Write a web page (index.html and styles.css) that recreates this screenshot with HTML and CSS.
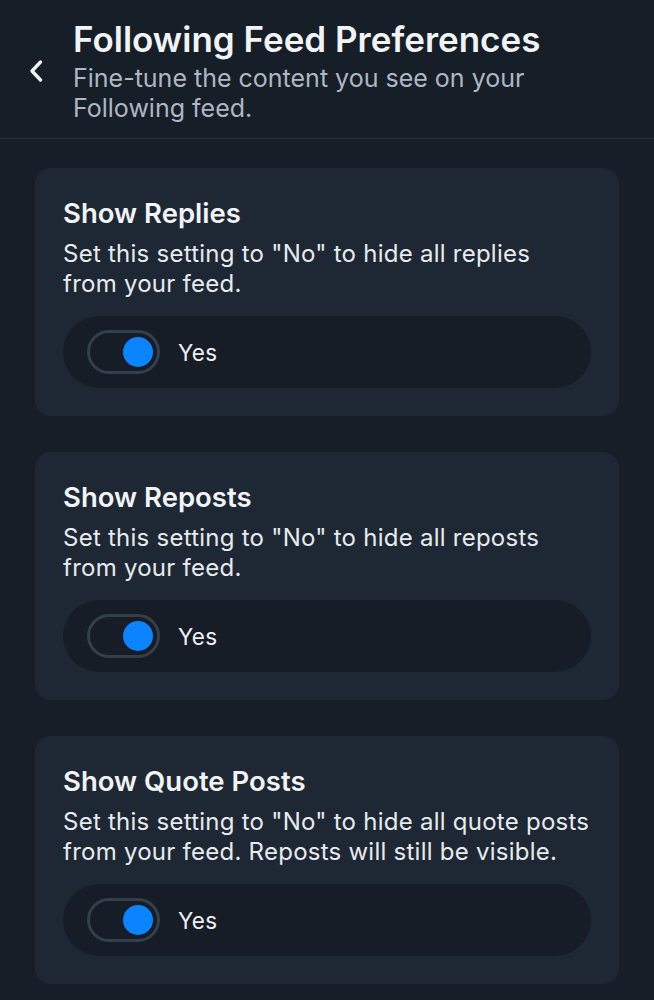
FILE: index.html
```html
<!DOCTYPE html>
<html lang="en">
<head>
  <meta charset="UTF-8" />
  <title>Following Feed Preferences</title>
  <link rel="stylesheet" href="styles.css">
</head>
<body>
  <header class="header">
    <button class="back" aria-label="Back">
      <svg width="20" height="24" viewBox="0 0 20 24" fill="none">
        <path d="M14.5 3 L6 12 L14.5 21" stroke="#f1f3f5" stroke-width="3.4" stroke-linecap="round" stroke-linejoin="round"/>
      </svg>
    </button>
    <div class="head-text">
      <div class="title">Following Feed Preferences</div>
      <div class="subtitle">Fine-tune the content you see on your Following feed.</div>
    </div>
  </header>

  <main class="list">
    <section class="card">
      <div class="card-title">Show Replies</div>
      <div class="card-desc">Set this setting to "No" to hide all replies from your feed.</div>
      <div class="toggle-row">
        <span class="switch on"><span class="knob"></span></span>
        <span class="toggle-label">Yes</span>
      </div>
    </section>

    <section class="card">
      <div class="card-title">Show Reposts</div>
      <div class="card-desc">Set this setting to "No" to hide all reposts from your feed.</div>
      <div class="toggle-row">
        <span class="switch on"><span class="knob"></span></span>
        <span class="toggle-label">Yes</span>
      </div>
    </section>

    <section class="card">
      <div class="card-title">Show Quote Posts</div>
      <div class="card-desc">Set this setting to "No" to hide all quote posts from your feed. Reposts will still be visible.</div>
      <div class="toggle-row">
        <span class="switch on"><span class="knob"></span></span>
        <span class="toggle-label">Yes</span>
      </div>
    </section>
  </main>
</body>
</html>
```

FILE: styles.css
```css
* {
  box-sizing: border-box;
}

body {
  margin: 0;
  padding: 0;
  background: #161e27;
  color: #f1f3f5;
  font-family: 'Inter', 'Noto Sans', sans-serif;
  overflow: hidden;
}

.header {
  display: flex;
  align-items: center;
  gap: 27px;
  padding: 19px 54px 15px 26px;
  border-bottom: 1px solid #27313c;
  height: 139px;
}

.back {
  background: none;
  border: none;
  padding: 0;
  margin-top: 0;
  display: flex;
  cursor: pointer;
}

.head-text {
  flex: 1;
}

.title {
  font-size: 35px;
  font-weight: 600;
  line-height: 40px;
}

.subtitle {
  font-size: 25px;
  line-height: 30px;
  color: #aeb7c2;
  margin-top: 4px;
}

.list {
  display: flex;
  flex-direction: column;
  gap: 36px;
  padding: 29px 35px;
}

.card {
  background: #1e2834;
  border-radius: 16px;
  padding: 28px 28px 28px;
}

.card-title {
  font-size: 27.5px;
  font-weight: 600;
  line-height: 34px;
}

.card-desc {
  font-size: 24px;
  line-height: 30px;
  letter-spacing: 0.25px;
  color: #e8ebee;
  margin-top: 9px;
}

.toggle-row {
  display: flex;
  align-items: center;
  gap: 18px;
  margin-top: 17px;
  height: 72px;
  padding: 0 24px;
  border-radius: 36px;
  background: #161d26;
}

.switch {
  width: 73px;
  height: 44px;
  border-radius: 22px;
  border: 3px solid #343f4b;
  display: flex;
  align-items: center;
  padding: 0 4px;
}

.switch.on {
  justify-content: flex-end;
}

.knob {
  width: 30px;
  height: 30px;
  border-radius: 50%;
  background: #0a84ff;
}

.toggle-label {
  font-size: 22.5px;
  letter-spacing: 0.3px;
  color: #eef0f3;
}
```
